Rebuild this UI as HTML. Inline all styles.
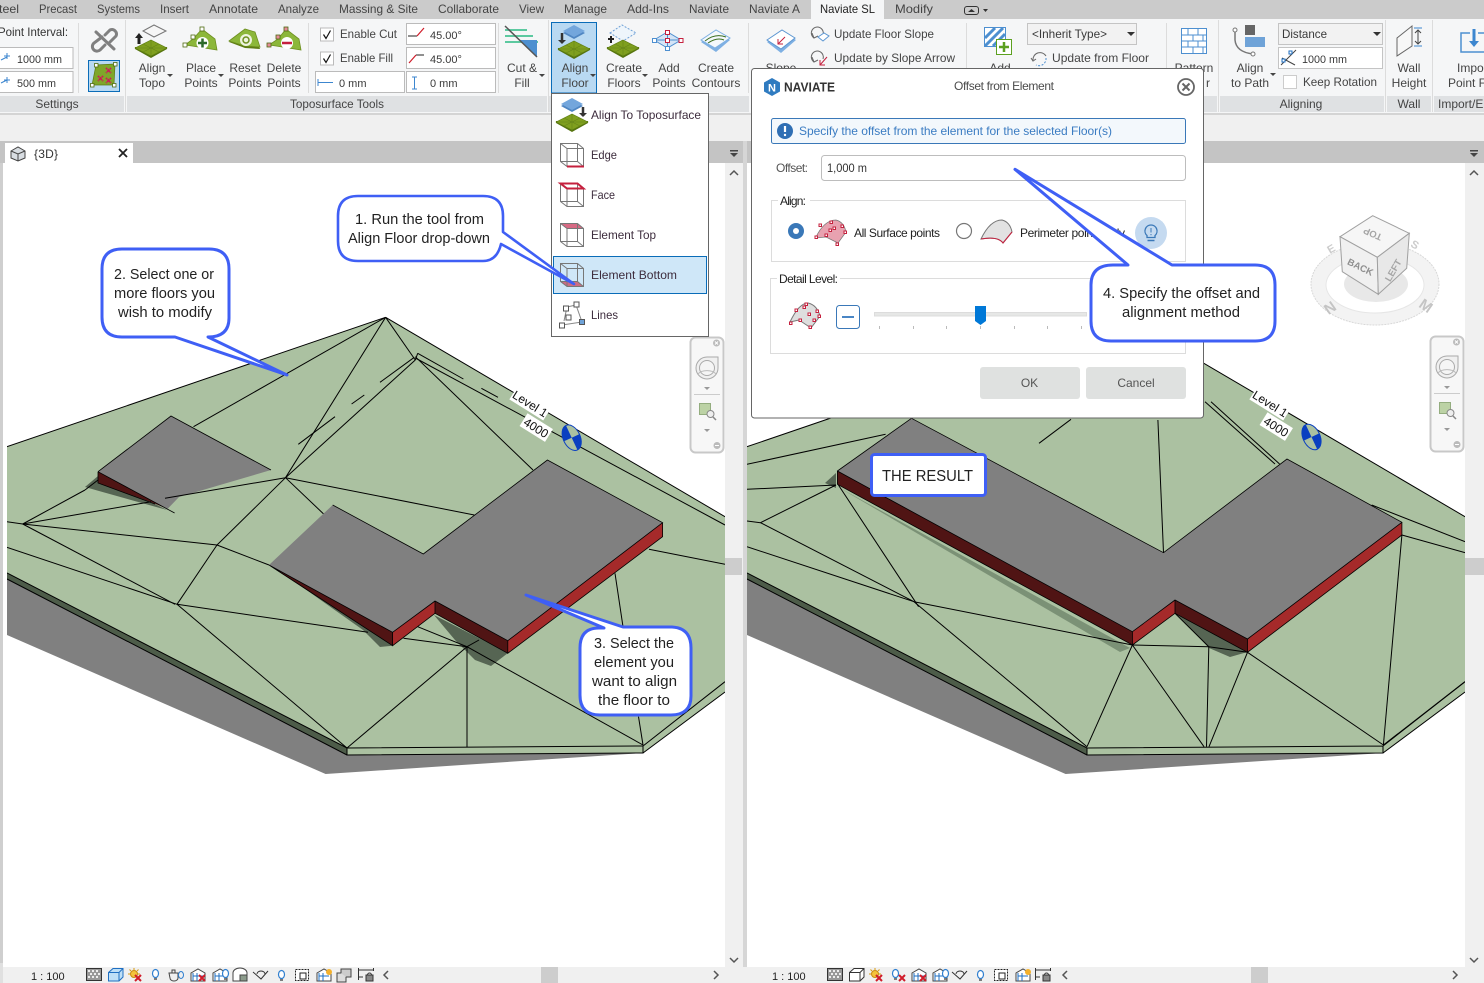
<!DOCTYPE html>
<html><head><meta charset="utf-8"><title>Naviate Align Floor</title>
<style>
html,body{margin:0;padding:0;background:#fff;width:1484px;height:983px;overflow:hidden}
svg{display:block}
text{font-family:"Liberation Sans",sans-serif;font-size:12px;fill:#444}
.c{text-anchor:middle}
.t{font-size:12px;fill:#3a3a3a}
.co{font-size:14.500px;fill:#222;text-anchor:middle}
.m{fill:#3d2c3d}
.d{fill:#333}
.l line,.l polyline{stroke:#000;stroke-width:1;fill:none}
</style></head><body>
<svg width="1484" height="983" viewBox="0 0 1484 983" xmlns="http://www.w3.org/2000/svg">
<defs>
<clipPath id="cl"><rect x="7" y="163" width="718" height="804"/></clipPath>
<clipPath id="cr"><rect x="747" y="163" width="718" height="804"/></clipPath>
<g id="topo"><polygon points="0,9 16,18 32,9 32,7 0,7" fill="#56740f"/><polygon points="0,8 16,0 32,8 16,16" fill="#7f9f1e" stroke="#5d7c12" stroke-width=".6"/><path d="M8,4 L24,12 M24,4 L8,12 M16,0 L16,16 M0,8 H32" stroke="#66851a" stroke-width=".6" fill="none"/></g>
<g id="plate"><polygon points="0,8 11,2 22,8 11,14" fill="#4f86c2"/><polygon points="0,6 11,0 22,6 11,12" fill="#73a6dc"/></g>
<g id="cube"><path d="M.5,.5 H17.500 L23.500,5.500 V23.500 H7 L.5,18.500Z M.5,.5 L7,5.500 H23.500 M7,5.500 V23.500 M.5,18.500 H17.500 V.5 M17.500,18.500 L23.500,23.500" fill="none" stroke="#777" stroke-width="1"/></g>
<g id="navi"><rect x=".5" y=".5" width="33" height="115" rx="5" fill="#f7f7f7" stroke="#c8c8c8" stroke-width="2"/><circle cx="26.500" cy="6" r="3.500" fill="#bbb"/><path d="M25,4.500 l3,3 M28,4.500 l-3,3" stroke="#fff"/><path d="M17,20 H28 V31 A11,11 0 1 1 17,20Z" fill="#f0f0f0" stroke="#aaa"/><circle cx="17" cy="31" r="7.500" fill="#f5f5f5" stroke="#aaa"/><path d="M8,37 a10,6 0 0 1 18,0" fill="none" stroke="#bbb"/><path d="M14,50 h6 l-3,3z" fill="#999"/><path d="M4,57.500 H30" stroke="#ccc"/><rect x="9.500" y="66.500" width="11" height="11" fill="#bcd2a5" stroke="#94ad7f"/><circle cx="20.500" cy="77" r="3.500" fill="#eee" stroke="#888"/><path d="M23,80 l3,3" stroke="#888" stroke-width="1.500"/><path d="M14,92 h6 l-3,3z" fill="#999"/><circle cx="27" cy="108.500" r="3.500" fill="#bbb"/><path d="M25,108.500 h4" stroke="#fff"/></g>
<g id="grid"><rect x=".5" y=".5" width="15" height="12" fill="#999" stroke="#333"/><path d="M2,2h2v2H2zM6,2h2v2H6zM10,2h2v2h-2zM4,5h2v2H4zM8,5h2v2H8zM12,5h2v2h-2zM2,8h2v2H2zM6,8h2v2H6zM10,8h2v2h-2z" fill="#eee"/></g>
<g id="sun"><circle cx="6" cy="6" r="3.500" fill="#f4c33c" stroke="#c98a10"/><path d="M6,0v2M0,6h2M1.500,1.500l1.500,1.500M10.500,1.500l-1.500,1.500M10,6h2" stroke="#d89a10"/><path d="M7,7l6,6M13,7l-6,6" stroke="#d01c2a" stroke-width="2"/></g>
<g id="bulb"><ellipse cx="3.500" cy="4.500" rx="3" ry="4" fill="#fff" stroke="#2f7fd0" stroke-width="1.200"/><path d="M2,10h3" stroke="#555" stroke-width="1.500"/></g>
<g id="house"><path d="M1,5 L8,1 L15,5 V13 H1Z" fill="#fff" stroke="#444"/><path d="M3,5v8M7,5v8M3,8h10" stroke="#1f6fc2"/></g>
<g id="x"><path d="M0,0l6,6M6,0l-6,6" stroke="#d01c2a" stroke-width="2"/></g>
<g id="rx"><path d="M0,0l5,5M5,0l-5,5" stroke="#d0145a" stroke-width="1.800" stroke-dasharray="1.500 .6"/></g>
<g id="chk"><rect x=".5" y=".5" width="13" height="13" fill="#fff" stroke="#bbb"/><path d="M3.500,7 L6,11 L10.500,3" fill="none" stroke="#111" stroke-width="1.200"/></g>
<g id="arr"><path d="M0,0h6l-3,3z" fill="#444"/></g>
<g id="terrainL">
<polygon points="7,635 325.600,774 643,753 347,755 7,578" fill="#808080"/>
<polygon points="7,573 347,748 347,755 7,579" fill="#4d5c49"/>
<polygon points="385.600,317.300 725,516.700 725,692 643,753 347,755 347,748 7,573 7,446.700" fill="#abc1a1"/>
</g>
</defs>

<rect width="1484" height="983" fill="#fff"/>
<rect x="0" y="114" width="1484" height="28" fill="#f0f0f0"/>
<rect x="0" y="141" width="1484" height="22" fill="#c4c4c4"/>
<rect x="0" y="163" width="3" height="804" fill="#cfcfcf"/>
<rect x="725" y="163" width="18" height="804" fill="#f0f0f0"/>
<rect x="743" y="141" width="4" height="842" fill="#d6d6d6"/>
<rect x="1465" y="163" width="19" height="804" fill="#f0f0f0"/>
<rect x="725" y="558" width="17" height="17" fill="#cdcdcd"/>
<rect x="1465" y="558" width="19" height="17" fill="#cdcdcd"/>

<g clip-path="url(#cl)">
<use href="#terrainL"/>
<path d="M7,446.700 L385.600,317.300 M385.600,317.300 L725,516.700 M7,573 L347,748 L643,746 L725,681.700 M347,748 V755 L643,753 V746 M643,753 L725,692 M7,579 L347,755" stroke="#000" stroke-width="1" fill="none"/>
<polygon points="85,487 98,476 151,502 167,510 99,491" fill="#566553"/>
<polygon points="98,471.700 98,483 151,502 167.500,509" fill="#4f1414"/>
<polygon points="98,471.700 171,416 271,470 179,497 167.500,509" fill="#808080"/>
<path d="M98,471.700 L171,416 L271,470 M98,471.700 L174.600,513 M98,471.700 V483 L155,504" stroke="#000" stroke-width=".8" fill="none"/>
<polygon points="434,615 455,640 475,660 491,666 508,653" fill="#566553"/>
<polygon points="274,567 363,630 380,647 392.600,645.700" fill="#566553"/>
<g class="l">
<line x1="385.600" y1="317.300" x2="193.500" y2="426.700"/>
<line x1="385.600" y1="317.300" x2="285.500" y2="477.700"/>
<line x1="385.600" y1="317.300" x2="415.300" y2="360"/>
<line x1="285.500" y1="477.700" x2="415.300" y2="360"/>
<line x1="285.500" y1="477.700" x2="474.300" y2="515"/>
<line x1="285.500" y1="477.700" x2="324.700" y2="515"/>
<line x1="285.500" y1="477.700" x2="165" y2="498.300"/>
<line x1="285.500" y1="477.700" x2="217" y2="545"/>
<line x1="217" y1="545" x2="22.700" y2="524"/>
<line x1="217" y1="545" x2="269" y2="565"/>
<line x1="217" y1="545" x2="177" y2="604.300"/>
<line x1="22.700" y1="524" x2="85" y2="490"/>
<line x1="85" y1="490" x2="98" y2="480"/>
<line x1="22.700" y1="524" x2="151" y2="501.700"/>
<line x1="22.700" y1="524" x2="175" y2="604.300"/>
<line x1="7" y1="521.700" x2="22.700" y2="524"/>
<line x1="177" y1="604.300" x2="7" y2="547.300"/>
<line x1="177" y1="604.300" x2="368" y2="632.300"/>
<line x1="177" y1="604.300" x2="347" y2="748"/>
<line x1="403.500" y1="638.300" x2="467" y2="646.700"/>
<line x1="467" y1="646.700" x2="347" y2="748"/>
<line x1="467" y1="646.700" x2="467" y2="747"/>
<line x1="467" y1="646.700" x2="643" y2="745"/>
<line x1="417.700" y1="626.700" x2="467" y2="646.700"/>
<line x1="467" y1="646.700" x2="479" y2="640"/>
<line x1="649" y1="549.300" x2="725" y2="564.300"/>
<line x1="615" y1="573.300" x2="623" y2="626.700"/>
<line x1="638.500" y1="716.700" x2="643" y2="745"/>
<line x1="415.300" y1="356.700" x2="533" y2="470"/>
<line x1="415.300" y1="358" x2="725" y2="525"/>
<line x1="417.700" y1="353.300" x2="463.400" y2="379"/>
<line x1="481.400" y1="388.300" x2="498" y2="397.300"/>
<line x1="351.600" y1="404" x2="364.300" y2="395"/>
<line x1="298.300" y1="444.300" x2="335" y2="416.700"/>
<line x1="380" y1="382.300" x2="414.300" y2="357.300"/>
<line x1="415.300" y1="360" x2="417.700" y2="353.300"/>
</g>
<polygon points="662.600,522.700 662.600,536.700 507.800,653.300 507.800,640.700" fill="#a52a2a"/>
<polygon points="435,601 507.800,640.700 507.800,653.300 435,613.300" fill="#501414"/>
<polygon points="392.600,632.300 435,601 435,613.300 392.600,645.700" fill="#a52a2a"/>
<polygon points="269,565 392.600,632.300 392.600,645.700" fill="#501414"/>
<polygon points="547.400,460 662.600,522.700 507.800,640.700 435,601 392.600,632.300 269,565 332.700,505 423.300,554" fill="#808080"/>
<path d="M269,565 L392.600,632.300 L435,601 L507.800,640.700 L662.600,522.700 L547.400,460 L423.300,554 L332.700,505 M662.600,522.700 V536.700 L507.800,653.300 V640.700 M507.800,653.300 L435,613.300 V601 M435,613.300 L392.600,645.700 V632.300 M392.600,645.700 L269,565" stroke="#000" stroke-width=".8" fill="none"/>
<g transform="translate(530,404) rotate(32)"><rect x="-20" y="-8" width="40" height="15" fill="#fff"/><text class="c" y="4" style="fill:#111">Level 1</text></g>
<g transform="translate(536,428) rotate(32)"><rect x="-15" y="-8" width="30" height="15" fill="#fff"/><text class="c" y="4" style="fill:#111">4000</text></g>
<g transform="translate(571.700,437.700) rotate(-25)"><ellipse rx="8.500" ry="13.500" fill="#abc1a1" stroke="#0a3fc0"/><path d="M0,0 V-13.500 A8.500,13.500 0 0 0 -8.500,0Z M0,0 V13.500 A8.500,13.500 0 0 0 8.500,0Z" fill="#0a3fc0"/></g>
</g>

<g clip-path="url(#cr)">
<use href="#terrainL" x="740"/>
<path d="M747,446.700 L1125.600,317.300 M1125.600,317.300 L1465,516.700 M747,573 L1087,748 L1383,746 L1465,681.700 M1087,748 V755 L1383,753 V746 M1383,753 L1465,692 M747,579 L1087,755" stroke="#000" stroke-width="1" fill="none"/>
<polygon points="1175,613 1209,648 1230,657 1247.500,652" fill="#566553"/>
<polygon points="825,483 836,473 836,488" fill="#566553"/>
<polygon points="838,487 1130,648 1120,652" fill="#7b9176"/>
<g class="l">
<line x1="747" y1="464.300" x2="885.600" y2="434.300"/>
<line x1="747" y1="489.300" x2="836" y2="485"/>
<line x1="760.500" y1="522.700" x2="836" y2="485"/>
<line x1="747" y1="521" x2="760.500" y2="522.700"/>
<line x1="760.500" y1="522.700" x2="914" y2="601.700"/>
<line x1="914" y1="601.700" x2="1087" y2="746.700"/>
<line x1="747" y1="546.700" x2="914" y2="601.700"/>
<line x1="914" y1="601.700" x2="1132.400" y2="645"/>
<line x1="838.400" y1="485" x2="918.600" y2="606.700"/>
<line x1="1132.400" y1="645" x2="1208.800" y2="646.700"/>
<line x1="1208.800" y1="646.700" x2="1247.500" y2="652.300"/>
<line x1="1175" y1="613.300" x2="1208.800" y2="646.700"/>
<line x1="1132.400" y1="645" x2="1087" y2="746.700"/>
<line x1="1132.400" y1="645" x2="1204" y2="746.700"/>
<line x1="1208.800" y1="646.700" x2="1206.500" y2="746.700"/>
<line x1="1247.500" y1="652.300" x2="1209" y2="746.700"/>
<line x1="1247.500" y1="652.300" x2="1383.400" y2="745"/>
<line x1="1401.900" y1="535" x2="1383.400" y2="745"/>
<line x1="1401.900" y1="535" x2="1465" y2="552.700"/>
<line x1="1371.700" y1="505" x2="1465" y2="541.700"/>
<line x1="1383.400" y1="745" x2="1465" y2="681.700"/>
<line x1="1157.900" y1="420" x2="1163.500" y2="552.700"/>
<line x1="1071" y1="419.300" x2="1039" y2="443.300"/>
<line x1="1211" y1="401.700" x2="1279.600" y2="464"/>
<line x1="1205" y1="401.700" x2="1275" y2="464"/>
</g>
<polygon points="1401.900,522.300 1401.900,535 1247.500,652.300 1247.500,639" fill="#a52a2a"/>
<polygon points="1175,600 1247.500,639 1247.500,652.300 1175,613.300" fill="#501414"/>
<polygon points="1132.400,631.700 1175,600 1175,613.300 1132.400,645" fill="#a52a2a"/>
<polygon points="837.400,471 1132.400,631.700 1132.400,645 837.400,484.300" fill="#501414"/>
<polygon points="1287,459 1401.900,522.300 1247.500,639 1175,600 1132.400,631.700 837.400,471 911.500,418.300 1163.500,552.700" fill="#808080"/>
<path d="M837.400,471 L1132.400,631.700 L1175,600 L1247.500,639 L1401.900,522.300 L1287,459 L1163.500,552.700 L911.500,418.300 L837.400,471 V484.300 L1132.400,645 V631.700 M1132.400,645 L1175,613.300 V600 M1175,613.300 L1247.500,652.300 V639 M1247.500,652.300 L1401.900,535 V522.300" stroke="#000" stroke-width=".8" fill="none"/>
<g transform="translate(1270,404) rotate(32)"><rect x="-20" y="-8" width="40" height="15" fill="#fff"/><text class="c" y="4" style="fill:#111">Level 1</text></g>
<g transform="translate(1276,427) rotate(32)"><rect x="-15" y="-8" width="30" height="15" fill="#fff"/><text class="c" y="4" style="fill:#111">4000</text></g>
<g transform="translate(1311.500,437) rotate(-25)"><ellipse rx="8.500" ry="13.500" fill="#abc1a1" stroke="#0a3fc0"/><path d="M0,0 V-13.500 A8.500,13.500 0 0 0 -8.500,0Z M0,0 V13.500 A8.500,13.500 0 0 0 8.500,0Z" fill="#0a3fc0"/></g>
</g>

<!-- tab -->
<rect x="5" y="143" width="128" height="20" fill="#fff"/>
<g transform="translate(11,147)"><path d="M0,4 L7,0 L14,4 V11 L7,14 L0,11Z" fill="#d8dde2" stroke="#444"/><path d="M0,4 L7,7 L14,4 M7,7 V14" stroke="#444" fill="none"/></g>
<text x="34" y="158" style="fill:#333" textLength="24">{3D}</text>
<path d="M119,149 l8,8 M127,149 l-8,8" stroke="#222" stroke-width="1.800"/>
<g fill="#444"><rect x="730" y="150" width="8" height="1.500"/><path d="M730,153 h8 l-4,4z"/><rect x="1470" y="150" width="8" height="1.500"/><path d="M1470,153 h8 l-4,4z"/></g>
<g fill="none" stroke="#555" stroke-width="1.500"><path d="M730,175 l4,-4 l4,4 M730,958 l4,4 l4,-4 M1470,175 l4,-4 l4,4 M1470,958 l4,4 l4,-4"/></g>

<use href="#navi" x="690" y="337"/>
<use href="#navi" x="1430" y="336"/>

<!-- viewcube -->
<g>
<ellipse cx="1375" cy="284" rx="64" ry="41" fill="#f3f3f3" stroke="#d8d8d8" stroke-dasharray="2 1"/>
<ellipse cx="1375" cy="285" rx="49" ry="28" fill="#fff" stroke="#e6e6e6"/>
<ellipse cx="1376" cy="284" rx="32" ry="18" fill="#e8e8e8"/>
<text transform="translate(1333,252) rotate(-30)" class="c" style="font-size:11px;fill:#ccc;font-weight:bold">E</text>
<text transform="translate(1413,248) rotate(30)" class="c" style="font-size:11px;fill:#ccc;font-weight:bold">S</text>
<polygon points="1372.700,215.700 1409.300,233.300 1377.300,257.300 1340,236.700" fill="#f6f6f6" stroke="#a0a0a0"/>
<polygon points="1340,236.700 1377.300,257.300 1378.300,294.300 1342.300,271.700" fill="#f0f0f0" stroke="#a0a0a0"/>
<polygon points="1377.300,257.300 1409.300,233.300 1406.700,268.300 1378.300,294.300" fill="#e8e8e8" stroke="#a0a0a0"/>
<text transform="translate(1374,231) rotate(204)" class="c" style="font-size:9.500px;fill:#a5a5a5;font-weight:bold">TOP</text>
<text transform="translate(1359,270) rotate(26)" class="c" style="font-size:9.500px;fill:#8f8f8f;font-weight:bold">BACK</text>
<text transform="translate(1396,272) rotate(-60)" class="c" style="font-size:9.500px;fill:#a5a5a5;font-weight:bold">LEFT</text>
<text transform="translate(1333,312) rotate(-35)" class="c" style="font-size:15px;fill:#c4c4c4;font-weight:bold">N</text>
<text transform="translate(1423,310) rotate(35)" class="c" style="font-size:15px;fill:#c4c4c4;font-weight:bold">M</text>
</g>

<!-- status bars -->
<rect x="0" y="967" width="1484" height="16" fill="#f0f0f0"/>
<rect x="0" y="963" width="3" height="20" fill="#e0e0e0"/>
<rect x="541" y="967" width="17" height="16" fill="#cdcdcd"/>
<rect x="1251" y="967" width="17" height="16" fill="#cdcdcd"/>
<text x="31" y="980" style="fill:#222;font-size:11px">1 : 100</text>
<text x="772" y="980" style="fill:#222;font-size:11px">1 : 100</text>
<g fill="none" stroke="#555" stroke-width="1.500"><path d="M388,971 l-4,4 l4,4 M714,971 l4,4 l-4,4 M1067,971 l-4,4 l4,4 M1453,971 l4,4 l-4,4"/></g>
<g>
<use href="#grid" x="86" y="968"/>
<g transform="translate(108,968)"><path d="M.5,4.500 L5,.5 H15 V9 L11,13 H.5Z" fill="#bfe0f7" stroke="#1f6fc2"/><path d="M.5,4.500 H11 V13 M11,4.500 L15,.5" fill="none" stroke="#1f6fc2"/></g>
<use href="#sun" x="128" y="968"/>
<use href="#bulb" x="152" y="969"/>
<g transform="translate(169,968)" fill="none" stroke="#444"><path d="M0,5 h9 v5 a4,3 0 0 1 -8,0Z M3,5 V2 h3 v3"/><ellipse cx="12" cy="7" rx="2.500" ry="3.500" stroke="#2f7fd0"/></g>
<use href="#house" x="190" y="968"/><use href="#x" x="199" y="975"/>
<use href="#house" x="212" y="968"/><use href="#bulb" x="222" y="969"/>
<g transform="translate(232,968)"><path d="M1,5 a7,5 0 0 1 14,0 V13 H1Z" fill="#fff" stroke="#444"/><rect x="8" y="7" width="7" height="6" fill="#8a9a8a" stroke="#444"/></g>
<g transform="translate(253,970)" fill="none" stroke="#333"><path d="M0,2 L8,9 L15,1 M4,4 a4,3 0 1 1 8,0"/></g>
<use href="#bulb" x="278" y="970"/>
<g transform="translate(295,969)"><rect x=".5" y=".5" width="13" height="11" fill="#fff" stroke="#222" stroke-dasharray="2 1"/><rect x="5" y="4" width="6" height="6" fill="none" stroke="#222"/></g>
<use href="#house" x="316" y="968"/><circle cx="329" cy="972" r="3" fill="#f4b12c"/>
<g transform="translate(337,969)" fill="#ddd" stroke="#444"><rect x="0" y="4" width="9" height="9"/><path d="M4,4 V0 H14 V8 H9" fill="#ccc"/></g>
<g transform="translate(358,968)" stroke="#333" fill="none"><path d="M.5,0 V12 M15.500,0 V3 M0,2 H16 M0,9 H5"/><rect x="8" y="7" width="7" height="6" fill="#888"/><path d="M9.500,7 a2,2 0 0 1 4,0"/></g>
</g>
<g>
<use href="#grid" x="827" y="968"/>
<g transform="translate(849,968)"><path d="M.5,4.500 L5,.5 H15 V9 L11,13 H.5Z" fill="#fff" stroke="#333"/><path d="M.5,4.500 H11 V13 M11,4.500 L15,.5" fill="none" stroke="#333"/></g>
<use href="#sun" x="869" y="968"/>
<use href="#bulb" x="892" y="969"/><use href="#x" x="899" y="975"/>
<use href="#house" x="911" y="968"/><use href="#x" x="920" y="975"/>
<use href="#house" x="932" y="968"/><use href="#bulb" x="942" y="969"/>
<g transform="translate(952,970)" fill="none" stroke="#333"><path d="M0,2 L8,9 L15,1 M4,4 a4,3 0 1 1 8,0"/></g>
<use href="#bulb" x="977" y="970"/>
<g transform="translate(994,969)"><rect x=".5" y=".5" width="13" height="11" fill="#fff" stroke="#222" stroke-dasharray="2 1"/><rect x="5" y="4" width="6" height="6" fill="none" stroke="#222"/></g>
<use href="#house" x="1015" y="968"/><circle cx="1028" cy="972" r="3" fill="#f4b12c"/>
<g transform="translate(1035,968)" stroke="#333" fill="none"><path d="M.5,0 V12 M15.500,0 V3 M0,2 H16 M0,9 H5"/><rect x="8" y="7" width="7" height="6" fill="#888"/><path d="M9.500,7 a2,2 0 0 1 4,0"/></g>
</g>

<!-- ribbon -->
<rect x="0" y="0" width="1484" height="19" fill="#cbcbcb"/>
<rect x="0" y="19" width="1484" height="77" fill="#f5f6f7"/>
<rect x="0" y="96" width="1484" height="17" fill="#f5f6f7"/>
<rect x="0" y="113" width="1484" height="2" fill="#d4d4d4"/>
<g fill="#dfe1e3">
<rect x="0" y="96" width="124" height="16"/><rect x="127" y="96" width="420" height="16"/><rect x="549" y="96" width="200" height="16"/><rect x="751" y="96" width="214" height="16"/><rect x="968" y="96" width="198" height="16"/><rect x="1168" y="96" width="49" height="16"/><rect x="1220" y="96" width="164" height="16"/><rect x="1387" y="96" width="44" height="16"/><rect x="1434" y="96" width="50" height="16"/>
</g>
<g fill="#dcdcdc"><rect x="78" y="23" width="1" height="70"/><rect x="125" y="20" width="1" height="92"/><rect x="308" y="23" width="1" height="70"/><rect x="498" y="23" width="1" height="70"/><rect x="548" y="20" width="1" height="92"/><rect x="748" y="23" width="1" height="70"/><rect x="966" y="23" width="1" height="70"/><rect x="1166" y="23" width="1" height="70"/><rect x="1218" y="20" width="1" height="92"/><rect x="1385" y="20" width="1" height="92"/><rect x="1432" y="20" width="1" height="92"/></g>
<rect x="811" y="0" width="73" height="19" fill="#f5f6f7"/>
<g lengthAdjust="spacingAndGlyphs">
<text x="-1" y="13" textLength="20" lengthAdjust="spacingAndGlyphs">teel</text><text x="39" y="13" textLength="38" lengthAdjust="spacingAndGlyphs">Precast</text><text x="97" y="13" textLength="43" lengthAdjust="spacingAndGlyphs">Systems</text><text x="160" y="13" textLength="29" lengthAdjust="spacingAndGlyphs">Insert</text><text x="209" y="13" textLength="49" lengthAdjust="spacingAndGlyphs">Annotate</text><text x="278" y="13" textLength="41" lengthAdjust="spacingAndGlyphs">Analyze</text><text x="339" y="13" textLength="79" lengthAdjust="spacingAndGlyphs">Massing &amp; Site</text><text x="438" y="13" textLength="61" lengthAdjust="spacingAndGlyphs">Collaborate</text><text x="519" y="13" textLength="25" lengthAdjust="spacingAndGlyphs">View</text><text x="564" y="13" textLength="43" lengthAdjust="spacingAndGlyphs">Manage</text><text x="627" y="13" textLength="42" lengthAdjust="spacingAndGlyphs">Add-Ins</text><text x="689" y="13" textLength="40" lengthAdjust="spacingAndGlyphs">Naviate</text><text x="749" y="13" textLength="51" lengthAdjust="spacingAndGlyphs">Naviate A</text><text x="820" y="13" style="fill:#222" textLength="55" lengthAdjust="spacingAndGlyphs">Naviate SL</text><text x="895" y="13" textLength="38" lengthAdjust="spacingAndGlyphs">Modify</text>
</g>
<g><rect x="964.500" y="6.500" width="14" height="8" rx="2.500" fill="none" stroke="#333"/><path d="M968,12 h7 l-3.500,-3z" fill="#333"/><path d="M983,9 h5 l-2.500,3z" fill="#333"/></g>

<!-- settings -->
<text x="-2" y="36" style="fill:#333" textLength="70" lengthAdjust="spacingAndGlyphs">Point Interval:</text>
<rect x="-2" y="47.500" width="75" height="21" fill="#fff" stroke="#bbb"/><rect x="-2" y="71.500" width="75" height="21" fill="#fff" stroke="#bbb"/>
<text x="17" y="63" class="t" style="font-size:11px" textLength="45" lengthAdjust="spacingAndGlyphs">1000 mm</text><text x="17" y="87" class="t" style="font-size:11px" textLength="39" lengthAdjust="spacingAndGlyphs">500 mm</text>
<path d="M1,60 l6,-3 M7,53 v6 M4,56 h6" stroke="#3c86cf" fill="none"/><path d="M1,83 l6,-3 M7,77 v6 M4,80 h6" stroke="#3c86cf" fill="none"/>
<g fill="none" stroke="#808080" stroke-width="3" stroke-linecap="round">
<path d="M96,32 L114,49"/>
<path d="M105,35 L110,30 A4.500,4.500 0 0 1 116,36 L110,42"/>
<path d="M102,37 L94,43 A4.500,4.500 0 0 0 100,50 L105,45"/>
</g>
<rect x="88.500" y="60.500" width="31" height="31" fill="#b9d9f2" stroke="#0a6cb8"/>
<polygon points="96,65 115,64 114,85 92,85" fill="#7fa62a" stroke="#5d7c12" stroke-width=".7"/>
<g fill="#fff" stroke="#4e6a10" stroke-width=".8"><rect x="94.500" y="63.500" width="3.500" height="3.500"/><rect x="113.500" y="62.500" width="3.500" height="3.500"/><rect x="112.500" y="83.500" width="3.500" height="3.500"/><rect x="90.500" y="83.500" width="3.500" height="3.500"/></g>
<use href="#rx" x="106" y="68"/><use href="#rx" x="98" y="76"/><use href="#rx" x="106" y="78"/>
<text x="57" y="108" class="c">Settings</text>

<!-- toposurface -->
<polygon points="143,31 154,25 166,31 154,37" fill="#f6f6f6" stroke="#777"/>
<path d="M139,44 V37" stroke="#222" stroke-width="3"/><path d="M135,38 L139,33 L143,38Z" fill="#222"/>
<use href="#topo" x="135" y="40"/>
<text x="152" y="72" class="c">Align</text><text x="152" y="87" class="c">Topo</text><use href="#arr" x="167" y="74"/>
<polygon points="185,45 193,39 202,29 215,39 217,50 192,46" fill="#8cb73a" stroke="#6d8f1f" stroke-width=".8"/>
<circle cx="202.500" cy="43" r="6" fill="#fff"/><path d="M198,43 h9 M202.500,38.500 v9" stroke="#2c6a2a" stroke-width="2.500"/>
<g fill="#fff" stroke="#4e6a10" stroke-width=".8"><rect x="183" y="43" width="4" height="4"/><rect x="191" y="35" width="4" height="4"/><rect x="200" y="27" width="4" height="4"/></g>
<text x="201" y="72" class="c">Place</text><text x="201" y="87" class="c">Points</text><use href="#arr" x="218" y="74"/>
<polygon points="229,42 245,31 255,34 260,49 245,48" fill="#5d7c12"/>
<polygon points="229,41 245,29 255,32 260,47 245,46" fill="#8cb73a" stroke="#6d8f1f" stroke-width=".8"/>
<circle cx="246" cy="40" r="6" fill="#eef4df"/><circle cx="246" cy="40" r="3" fill="none" stroke="#6d8f1f" stroke-width="1.500"/>
<text x="245" y="72" class="c">Reset</text><text x="245" y="87" class="c">Points</text>
<polygon points="269,45 278,39 286,29 299,39 301,50 276,46" fill="#8cb73a" stroke="#6d8f1f" stroke-width=".8"/>
<circle cx="287" cy="43" r="6" fill="#fff"/><path d="M282,43 h10" stroke="#c5203e" stroke-width="2.500"/>
<g fill="#e58a9a" stroke="#4e6a10" stroke-width=".8"><rect x="267" y="43" width="4" height="4"/><rect x="276" y="35" width="4" height="4"/><rect x="284" y="27" width="4" height="4"/></g>
<text x="284" y="72" class="c">Delete</text><text x="284" y="87" class="c">Points</text>
<use href="#chk" x="320" y="27.500"/><use href="#chk" x="320" y="51.500"/>
<text x="340" y="38" textLength="57" lengthAdjust="spacingAndGlyphs">Enable Cut</text><text x="340" y="62" textLength="53" lengthAdjust="spacingAndGlyphs">Enable Fill</text>
<g fill="#fff" stroke="#bbb"><rect x="406.500" y="23.500" width="89" height="21"/><rect x="406.500" y="47.500" width="89" height="21"/><rect x="315.500" y="71.500" width="89" height="21"/><rect x="406.500" y="71.500" width="89" height="21"/></g>
<path d="M408,36 H417" stroke="#222" fill="none"/><path d="M417,36 L424,28" stroke="#d01c2a" stroke-width="1.200"/>
<path d="M416,55 H424" stroke="#222" fill="none"/><path d="M409,63 L416,55" stroke="#d01c2a" stroke-width="1.200"/>
<path d="M318,79 v7 M318,82.500 H333" stroke="#3c86cf" fill="none"/><path d="M412,77 h5 M414.500,77 v12 M412,89 h5" stroke="#3c86cf" fill="none"/>
<text x="430" y="39" class="t" style="font-size:11px">45.00°</text><text x="430" y="63" class="t" style="font-size:11px">45.00°</text><text x="339" y="87" class="t" style="font-size:11px">0 mm</text><text x="430" y="87" class="t" style="font-size:11px">0 mm</text>
<text x="337" y="108" class="c" textLength="94" lengthAdjust="spacingAndGlyphs">Toposurface Tools</text>
<path d="M505,30 H527 M505,36 H533 M505,42 H538" stroke="#5cc9a0" stroke-width="2"/>
<polygon points="537,40 537,57 519,40" fill="#4d8fd0"/>
<path d="M505,26 L537,57" stroke="#555" stroke-width="1.500"/>
<text x="522" y="72" class="c">Cut &amp;</text><text x="522" y="87" class="c">Fill</text><use href="#arr" x="539" y="74"/>

<!-- Align Floor -->
<rect x="551.500" y="22.500" width="45" height="70.500" fill="#b9d9f2" stroke="#0a6cb8"/>
<use href="#plate" x="563" y="25"/>
<path d="M562,33 V42" stroke="#333" stroke-width="2.500"/><path d="M558,40 h8 l-4,4z" fill="#333"/>
<use href="#topo" x="558" y="41"/>
<text x="575" y="72" class="c">Align</text><text x="575" y="87" class="c">Floor</text><use href="#arr" x="590" y="74"/>

<polygon points="610,33 622,25 636,33 623,41" fill="#eef5fb" stroke="#6ea0d6" stroke-dasharray="2 1.500"/>
<path d="M608,39 h6 M611,36 v7" stroke="#222" stroke-width="2"/>
<use href="#topo" x="607" y="40"/>
<text x="624" y="72" class="c">Create</text><text x="624" y="87" class="c">Floors</text><use href="#arr" x="642" y="74"/>
<polygon points="655,40 668,33 681,40 668,47" fill="#d4e4f6"/>
<path d="M654,40 L667.500,32 L681,40 L667.500,48Z M667.500,32 V48 M654,40 H681" fill="none" stroke="#4d8fd0"/>
<g fill="#fff" stroke="#c5203e"><rect x="665.500" y="30.500" width="4" height="4"/><rect x="665.500" y="38.500" width="4" height="4"/><rect x="679" y="38.500" width="4" height="4"/></g>
<g fill="#fff" stroke="#4d8fd0"><rect x="652.500" y="38.500" width="4" height="4"/><rect x="665.500" y="46.500" width="4" height="4"/></g>
<text x="669" y="72" class="c">Add</text><text x="669" y="87" class="c">Points</text>
<polygon points="701,42 716,32 730,40 716,52" fill="#7eb0e3"/>
<polygon points="701,40 716,30 730,38 715,48" fill="#f4f8fc" stroke="#7eb0e3"/>
<path d="M705,41 Q715,33 726,37 M708,43 Q717,37 724,40" stroke="#3b6e1f" fill="none"/>
<text x="716" y="72" class="c">Create</text><text x="716" y="87" class="c">Contours</text>

<polygon points="767,42 782,31 796,40 781,53" fill="#7eb0e3"/>
<polygon points="767,40 782,30 795,38 781,49" fill="#fff" stroke="#5d97d2"/>
<path d="M785,37 L778,44 M778,39 V44 H783" stroke="#c5203e" fill="none"/>
<text x="781" y="72" class="c">Slope</text>
<g fill="none" stroke="#666"><path d="M814,38 a6,6 0 1 1 9,-3"/><path d="M812,33 l2,5 l4,-2"/></g><polygon points="818,37 824,33 829,36 823,41" fill="#fff" stroke="#5d97d2"/>
<g fill="none" stroke="#666"><path d="M814,62 a6,6 0 1 1 9,-3"/><path d="M812,57 l2,5 l4,-2"/></g><path d="M827,57 L820,65 M820,60 V65 H825" stroke="#c5203e" fill="none"/>
<text x="834" y="38" textLength="100" lengthAdjust="spacingAndGlyphs">Update Floor Slope</text><text x="834" y="62" textLength="121" lengthAdjust="spacingAndGlyphs">Update by Slope Arrow</text>

<rect x="984.500" y="27.500" width="21" height="19" fill="#fff" stroke="#4d8fd0"/>
<path d="M985,38 L995,28 M985,46 L1003,28 M993,46 L1005,34" stroke="#4d8fd0" stroke-width="3"/>
<rect x="996.500" y="39.500" width="15" height="15" fill="#fff" stroke="#5ca020"/><path d="M999,47 h10 M1004,42 v10" stroke="#5ca020" stroke-width="2.500"/>
<text x="1000" y="72" class="c">Add</text>
<rect x="1027.500" y="23.500" width="109" height="21" fill="#f2f2f2" stroke="#c4c4c4"/>
<text x="1032" y="38" class="t" textLength="75" lengthAdjust="spacingAndGlyphs">&lt;Inherit Type&gt;</text><path d="M1127,32 h8 l-4,4z" fill="#333"/>
<path d="M1033,60 a7,7 0 0 1 13,-4" stroke="#666" fill="none"/><path d="M1046,58 a7,7 0 0 1 -10,7" stroke="#4d8fd0" stroke-dasharray="2 1.500" fill="none"/><path d="M1031,58 l2,3 l3,-2" stroke="#666" fill="none"/>
<text x="1052" y="62" textLength="97" lengthAdjust="spacingAndGlyphs">Update from Floor</text>
<g fill="#fff" stroke="#4d8fd0"><rect x="1181.500" y="28.500" width="25" height="25"/></g>
<path d="M1181,35 H1207 M1181,41 H1207 M1181,47 H1207 M1188,28 V35 M1198,28 V35 M1193,35 V41 M1203,35 V41 M1188,41 V47 M1198,41 V47 M1193,47 V53 M1203,47 V53" stroke="#4d8fd0"/>
<text x="1194" y="72" class="c">Pattern</text><text x="1206" y="87">r</text>
<path d="M1235,30 V40 Q1236,52 1253,54" stroke="#777" stroke-width="1.500" fill="none"/><circle cx="1235" cy="30" r="2" fill="#fff" stroke="#777"/><circle cx="1253" cy="54" r="2" fill="#fff" stroke="#777"/>
<rect x="1245" y="25" width="10" height="10" fill="#666"/><rect x="1245" y="37" width="20" height="10" fill="#6fa3d8"/>
<text x="1250" y="72" class="c">Align</text><text x="1250" y="87" class="c">to Path</text><use href="#arr" x="1270" y="73"/>
<rect x="1278.500" y="23.500" width="104" height="21" fill="#f2f2f2" stroke="#c4c4c4"/><text x="1282" y="38" class="t" textLength="45" lengthAdjust="spacingAndGlyphs">Distance</text><path d="M1373,32 h8 l-4,4z" fill="#333"/>
<rect x="1278.500" y="47.500" width="104" height="21" fill="#fff" stroke="#c4c4c4"/><text x="1302" y="63" class="t" style="font-size:11px" textLength="45" lengthAdjust="spacingAndGlyphs">1000 mm</text>
<path d="M1281,65 L1296,50 M1282,58 L1295,65" stroke="#444" fill="none"/><rect x="1282" y="59" width="3" height="3" fill="#fff" stroke="#1f6fc2"/><rect x="1289" y="51" width="3" height="3" fill="#fff" stroke="#1f6fc2"/>
<rect x="1283.500" y="75.500" width="13" height="13" fill="#fff" stroke="#ccc"/><text x="1303" y="86" textLength="74" lengthAdjust="spacingAndGlyphs">Keep Rotation</text>
<text x="1301" y="108" class="c">Aligning</text>
<polygon points="1397,38 1412,26 1412,46 1397,56" fill="#f7f7f7" stroke="#666"/>
<path d="M1418,30 v14 M1415,33 l3,-3 l3,3 M1415,41 l3,3 l3,-3" stroke="#444" fill="none"/><path d="M1414,28 h8 M1414,46 h8" stroke="#3c86cf"/>
<text x="1409" y="72" class="c">Wall</text><text x="1409" y="87" class="c">Height</text><text x="1409" y="108" class="c">Wall</text>
<path d="M1470,33 H1461 V52 H1484 M1478,33 H1484" stroke="#4d8fd0" stroke-width="1.500" fill="none"/>
<path d="M1474,29 V43" stroke="#3c86cf" stroke-width="3"/><path d="M1469,41 h10 l-5,6z" fill="#3c86cf"/>
<text x="1457" y="72">Impo</text><text x="1448" y="87">Point F</text><text x="1438" y="108">Import/E</text>

<!-- dropdown -->
<rect x="551.500" y="93.500" width="157" height="243" fill="#fff" stroke="#666"/>
<use href="#plate" x="561" y="98"/>
<path d="M583,107 V116" stroke="#333" stroke-width="2.500"/><path d="M579,113 h8 l-4,4z" fill="#333"/>
<use href="#topo" x="556" y="114"/>
<text x="591" y="119" class="m" textLength="110" lengthAdjust="spacingAndGlyphs">Align To Toposurface</text>
<use href="#cube" x="560" y="143"/><path d="M567,166.500 H584" stroke="#c5203e" stroke-width="2"/>
<text x="591" y="159" class="m" textLength="26" lengthAdjust="spacingAndGlyphs">Edge</text>
<use href="#cube" x="560" y="183"/><path d="M560.500,183.500 H577.500 L583.500,188.500 H567Z" fill="none" stroke="#c5203e" stroke-width="2"/>
<text x="591" y="199" class="m" textLength="24" lengthAdjust="spacingAndGlyphs">Face</text>
<polygon points="560.500,223.500 577.500,223.500 583.500,228.500 567,228.500" fill="#d86a84"/>
<use href="#cube" x="560" y="223"/>
<text x="591" y="239" class="m" textLength="65" lengthAdjust="spacingAndGlyphs">Element Top</text>
<rect x="553.500" y="256.500" width="153" height="37" fill="#cfe7f8" stroke="#0a6cb8"/>
<polygon points="560.500,281.500 577.500,281.500 583.500,286.500 567,286.500" fill="#cc6c84"/>
<use href="#cube" x="560" y="263"/>
<text x="591" y="279" class="m" textLength="86" lengthAdjust="spacingAndGlyphs">Element Bottom</text>
<path d="M564,321 L567,307 M567,307 L576,305 L582,322 L562,325" stroke="#888" fill="none"/>
<g fill="#fff" stroke="#555"><rect x="563.500" y="306" width="5" height="5"/><rect x="574" y="302" width="5" height="5"/><rect x="566" y="315" width="5" height="5"/><rect x="559.500" y="323" width="5" height="5"/></g><rect x="579.500" y="319.500" width="5" height="5" fill="#6fa3d8" stroke="#555"/>
<text x="591" y="319" class="m" textLength="27" lengthAdjust="spacingAndGlyphs">Lines</text>

<!-- dialog -->
<rect x="751.500" y="68.500" width="452" height="349.500" rx="3" fill="#fff" stroke="#666"/>
<polygon points="772,78 780,82.500 780,91.500 772,96 764,91.500 764,82.500" fill="#2f7bc0"/>
<text x="772" y="91.500" class="c" style="font-size:11px;font-weight:bold;fill:#fff">N</text>
<text x="784" y="91.500" style="font-size:12.500px;font-weight:bold;fill:#333" textLength="51" lengthAdjust="spacingAndGlyphs">NAVIATE</text>
<text x="954" y="90" style="fill:#4b4b4b" textLength="100">Offset from Element</text>
<circle cx="1186" cy="87" r="8" fill="#fff" stroke="#666" stroke-width="1.800"/><path d="M1182.500,83.500 l7,7 M1189.500,83.500 l-7,7" stroke="#666" stroke-width="2"/>
<rect x="771.500" y="118.500" width="414" height="25" rx="2" fill="#f3f8fc" stroke="#3a78b8"/>
<circle cx="785" cy="131" r="8" fill="#2f6fb4"/><path d="M785,126 v6" stroke="#fff" stroke-width="2.200"/><circle cx="785" cy="135" r="1.200" fill="#fff"/>
<text x="799" y="135" style="fill:#3b7cc2" textLength="313">Specify the offset from the element for the selected Floor(s)</text>
<text x="776" y="172" style="fill:#555" textLength="32">Offset:</text>
<rect x="821.500" y="155.500" width="364" height="25" rx="3" fill="#fff" stroke="#bdbdbd"/>
<text x="827" y="172" class="d" textLength="40" lengthAdjust="spacingAndGlyphs">1,000 m</text>
<rect x="771.500" y="200.500" width="414" height="61" fill="#fff" stroke="#dcdcdc"/>
<rect x="778" y="195" width="32" height="12" fill="#fff"/><text x="780" y="205" style="fill:#222" textLength="26">Align:</text>
<circle cx="796" cy="231" r="8" fill="#3a78b8"/><circle cx="796" cy="231" r="3" fill="#fff"/>
<path d="M815.500,238 Q824,220 836,220 Q844,222 846,232 L838,243 L826,237Z" fill="#e8a2b0" stroke="#777" stroke-width=".7"/>
<g fill="#fff" stroke="#c5203e"><rect x="815" y="236" width="2.500" height="2.500"/><rect x="819" y="224" width="2.500" height="2.500"/><rect x="825" y="234" width="2.500" height="2.500"/><rect x="830" y="221" width="2.500" height="2.500"/><rect x="833" y="227" width="2.500" height="2.500"/><rect x="841" y="225" width="2.500" height="2.500"/><rect x="844" y="231" width="2.500" height="2.500"/><rect x="836" y="243" width="2.500" height="2.500"/><rect x="829" y="229" width="2.500" height="2.500"/></g>
<text x="854" y="237" style="fill:#222" textLength="86">All Surface points</text>
<circle cx="964" cy="231" r="7.500" fill="#fff" stroke="#777" stroke-width="1.200"/>
<path d="M981,239 Q990,220 1002,220 Q1010,222 1012,232 L1003,243 Q998,236 981,239Z" fill="#e2e2e2" stroke="#777"/><path d="M981,239 Q998,236 1003,243 L1012,232" fill="none" stroke="#c5203e"/>
<text x="1020" y="237" style="fill:#222" textLength="105">Perimeter points only</text>
<circle cx="1151" cy="233" r="16" fill="#c5daf0"/>
<path d="M1151,225 a6,6 0 0 1 4,10.500 v2 h-8 v-2 a6,6 0 0 1 4,-10.500Z" fill="none" stroke="#3a78b8" stroke-width="1.300"/><path d="M1147.500,240.500 h7" stroke="#3a78b8" stroke-width="1.500"/><path d="M1151,228 v4.500 M1151,234 v1.200" stroke="#3a78b8"/>
<rect x="770.500" y="278.500" width="415" height="75" fill="#fff" stroke="#dcdcdc"/>
<rect x="777" y="273" width="63" height="12" fill="#fff"/><text x="779" y="283" style="fill:#222" textLength="59">Detail Level:</text>
<path d="M790,322 Q799,303 808,303 Q817,305 820,316 L811,328 L799,320Z" fill="#dedede" stroke="#777"/>
<g fill="#fff" stroke="#c5203e"><rect x="789.500" y="322" width="2.500" height="2.500"/><rect x="795" y="309" width="2.500" height="2.500"/><rect x="799" y="319" width="2.500" height="2.500"/><rect x="803" y="306" width="2.500" height="2.500"/><rect x="805" y="303" width="2.500" height="2.500"/><rect x="808" y="313" width="2.500" height="2.500"/><rect x="816" y="310" width="2.500" height="2.500"/><rect x="818" y="315" width="2.500" height="2.500"/><rect x="813" y="319" width="2.500" height="2.500"/><rect x="809" y="326" width="2.500" height="2.500"/></g>
<rect x="836.500" y="305.500" width="23" height="23" rx="3" fill="#fff" stroke="#3a78b8"/><rect x="842" y="316" width="12" height="2" fill="#4a86c5"/>
<rect x="874.500" y="312.500" width="212" height="3.500" fill="#e6e7e6" stroke="#dcdcdc"/>
<polygon points="975,306 986,306 986,321 980.500,325 975,321" fill="#0078d7"/>
<path d="M879.500,326v3M913.500,326v3M946.500,326v3M980.500,326v3M1014.500,326v3M1047.500,326v3M1081.500,326v3" stroke="#bbb"/>
<rect x="980" y="367" width="100" height="32" rx="3" fill="#dfe1e0"/><text x="1029.500" y="387" class="c" style="fill:#555">OK</text>
<rect x="1086" y="367" width="100" height="32" rx="3" fill="#dfe1e0"/><text x="1136" y="387" class="c" style="fill:#555">Cancel</text>

<!-- callouts -->
<g fill="#fff" stroke="#3f5ff5" stroke-width="3" stroke-linejoin="round">
<path d="M358,196 H483 Q503,196 503,216 V232 L574,284 L501,244 Q497,261 483,261 H358 Q338,261 338,241 V216 Q338,196 358,196Z" stroke-width="2.600"/>
<path d="M122,249 H209 Q229,249 229,269 V318 Q229,337 208,337 L287,375 L175,337 H122 Q102,337 102,317 V269 Q102,249 122,249Z"/>
<path d="M599,628 H604 L526,595 L623,627 H672 Q691,628 691,648 V696 Q691,715 671,715 H600 Q580,715 580,695 V648 Q580,628 599,628Z"/>
<path d="M1113,265 H1128 L1015,169.300 L1172,265 H1255 Q1275,265 1275,285 V321 Q1275,341 1255,341 H1111 Q1091,341 1091,321 V285 Q1091,265 1113,265Z"/>
<rect x="871.500" y="454.500" width="114" height="41" rx="3"/>
</g>
<text class="co" x="419.500" y="224" textLength="129" lengthAdjust="spacingAndGlyphs">1. Run the tool from</text><text class="co" x="419" y="243" textLength="142" lengthAdjust="spacingAndGlyphs">Align Floor drop-down</text>
<text class="co" x="164" y="279" textLength="100" lengthAdjust="spacingAndGlyphs">2. Select one or</text><text class="co" x="164.500" y="298" textLength="101" lengthAdjust="spacingAndGlyphs">more floors you</text><text class="co" x="165" y="317" textLength="94" lengthAdjust="spacingAndGlyphs">wish to modify</text>
<text class="co" x="634" y="648" textLength="80" lengthAdjust="spacingAndGlyphs">3. Select the</text><text class="co" x="634" y="667" textLength="80" lengthAdjust="spacingAndGlyphs">element you</text><text class="co" x="634.500" y="686" textLength="85" lengthAdjust="spacingAndGlyphs">want to align</text><text class="co" x="634" y="705" textLength="72" lengthAdjust="spacingAndGlyphs">the floor to</text>
<text class="co" x="1181.500" y="298" textLength="157" lengthAdjust="spacingAndGlyphs">4. Specify the offset and</text><text class="co" x="1181" y="317" textLength="118" lengthAdjust="spacingAndGlyphs">alignment method</text>
<text class="co" x="927.500" y="481" style="font-size:16px" textLength="91" lengthAdjust="spacingAndGlyphs">THE RESULT</text>
</svg>
</body></html>
